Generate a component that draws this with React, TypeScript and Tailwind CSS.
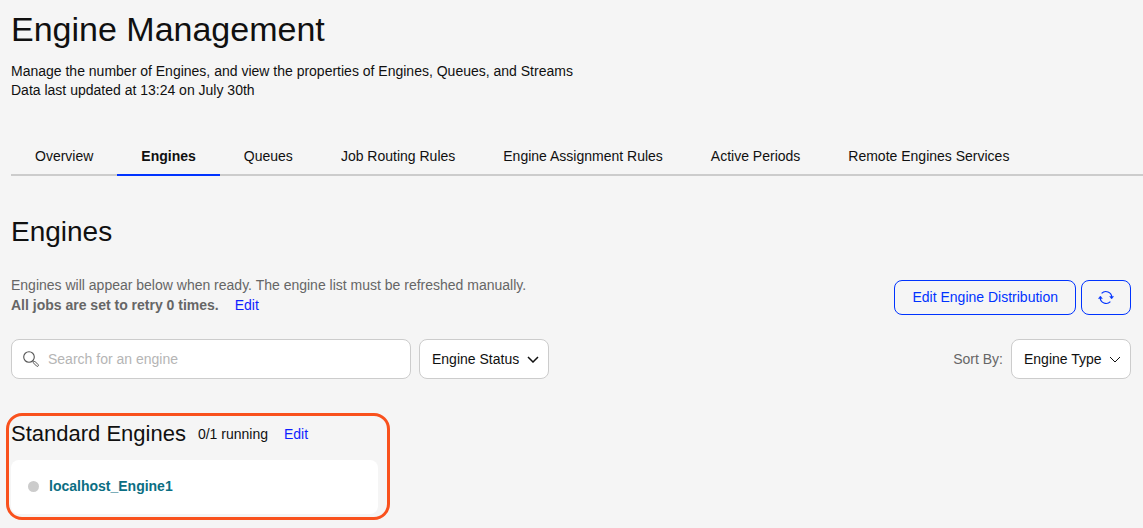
import { useState } from 'react';

const tabs = [
    'Overview',
    'Engines',
    'Queues',
    'Job Routing Rules',
    'Engine Assignment Rules',
    'Active Periods',
    'Remote Engines Services',
];

const engines = [{ name: 'localhost_Engine1', running: false }];

const SearchIcon = () => (
    <svg className="w-4 h-4 shrink-0" viewBox="0 0 16 16" fill="none" stroke="#555555">
        <circle cx="6" cy="6" r="5.3" strokeWidth="1.1" />
        <path d="M9.7 9.7l.9.9" strokeWidth="1.2" />
        <path
            d="M11.7 10.2l3.4 3.4a1 1 0 0 1-1.5 1.5l-3.4-3.4z"
            strokeWidth="1"
            strokeLinejoin="round"
        />
    </svg>
);

const RefreshIcon = () => (
    <svg className="w-4 h-4" viewBox="0 0 16 16" fill="none" stroke="currentColor">
        <path d="M3.6 4.4A5.9 5.9 0 0 1 13.8 8.4" strokeWidth="1.1" />
        <path d="M12.4 12.6A5.9 5.9 0 0 1 2.2 8.6" strokeWidth="1.1" />
        <path d="M11.6 7.4h4l-2 2.6z" fill="currentColor" strokeWidth=".4" />
        <path d="M.4 9.6h4l-2-2.6z" fill="currentColor" strokeWidth=".4" />
    </svg>
);

const Chevron = ({ className }: { className: string }) => (
    <svg
        className={`absolute top-4 h-2 pointer-events-none ${className}`}
        viewBox="0 0 12 8"
        fill="none"
        stroke="currentColor"
    >
        <path d="M1 2l5 5 5-5" />
    </svg>
);

const App = () => {
    const [active, setActive] = useState('Engines');
    const [search, setSearch] = useState('');

    const visible = engines.filter((engine) =>
        engine.name.toLowerCase().includes(search.toLowerCase()),
    );

    return (
        <div className="min-h-screen bg-[#f5f5f5] pl-[11px] pt-[7px] pb-2 font-['Liberation_Sans',Arial,sans-serif] text-sm text-[#101010]">
            <header>
                <h1 className="text-[34px] leading-[44px]">Engine Management</h1>
                <p className="mt-[11px] leading-[19px]">
                    Manage the number of Engines, and view the properties of
                    Engines, Queues, and Streams
                    <br />
                    Data last updated at 13:24 on July 30th
                </p>
            </header>

            <nav className="mt-9 flex border-b-2 border-[#cccccc]">
                {tabs.map((tab) => (
                    <button
                        key={tab}
                        onClick={() => setActive(tab)}
                        className={`-mb-0.5 px-6 pt-0.5 h-10 border-b-2 whitespace-nowrap ${
                            active === tab
                                ? 'border-[#0033ff] font-bold'
                                : 'border-transparent'
                        }`}
                    >
                        {tab}
                    </button>
                ))}
            </nav>

            <main className="pr-3">
                <h2 className="mt-10 text-[28px] leading-8">Engines</h2>

                <div className="mt-[27px] flex items-center justify-between">
                    <div className="leading-5 text-[#666666]">
                        <p>
                            Engines will appear below when ready. The engine list
                            must be refreshed manually.
                        </p>
                        <p>
                            <strong>All jobs are set to retry 0 times.</strong>
                            <a href="#retries" className="ml-4 text-[#0f1fff]">
                                Edit
                            </a>
                        </p>
                    </div>
                    <div className="flex gap-[5px] pt-1 text-[#0033ff]">
                        <button className="h-[35px] px-[17px] border border-current rounded-lg whitespace-nowrap">
                            Edit Engine Distribution
                        </button>
                        <button
                            aria-label="Refresh"
                            className="h-[35px] w-[50px] border border-current rounded-lg flex items-center justify-center"
                        >
                            <RefreshIcon />
                        </button>
                    </div>
                </div>

                <div className="mt-6 flex items-center justify-between">
                    <div className="flex gap-2">
                        <label className="flex items-center gap-[9px] h-10 w-[400px] pl-[11px] pr-3 bg-white border border-[#cccccc] rounded-lg">
                            <SearchIcon />
                            <input
                                type="text"
                                aria-label="Search for an engine"
                                placeholder="Search for an engine"
                                value={search}
                                onChange={(e) => setSearch(e.target.value)}
                                className="flex-1 outline-none placeholder:text-[#b5b5b5]"
                            />
                        </label>
                        <div className="relative">
                            <select
                                aria-label="Engine Status"
                                className="h-10 w-[130px] pl-3 appearance-none bg-white border border-[#cccccc] rounded-lg"
                            >
                                <option>Engine Status</option>
                            </select>
                            <Chevron className="right-2.5 w-3 stroke-[1.5]" />
                        </div>
                    </div>
                    <div className="flex items-center gap-2">
                        <label htmlFor="sort" className="text-[#666666]">
                            Sort By:
                        </label>
                        <div className="relative">
                            <select
                                id="sort"
                                className="h-10 w-[120px] pl-3 appearance-none bg-white border border-[#cccccc] rounded-lg"
                            >
                                <option>Engine Type</option>
                            </select>
                            <Chevron className="right-2.5 w-3" />
                        </div>
                    </div>
                </div>

                <section className="mt-[34px] -ml-[5px] w-[384px] border-3 border-[#f9511d] rounded-2xl pl-0.5 pr-[9px] pt-1 pb-[3px]">
                    <div className="flex items-center">
                        <h3 className="text-[22px] leading-7">Standard Engines</h3>
                        <span className="ml-3">0/1 running</span>
                        <a href="#standard" className="ml-4 text-[#0f1fff]">
                            Edit
                        </a>
                    </div>
                    <ul className="mt-3">
                        {visible.map((engine) => (
                            <li
                                key={engine.name}
                                className="flex items-center gap-2.5 h-[54px] px-[17px] pb-0.5 bg-white rounded-lg"
                            >
                                <span
                                    className={`w-[11px] h-[11px] rounded-full ${
                                        engine.running
                                            ? 'bg-green-500'
                                            : 'bg-[#cccccc]'
                                    }`}
                                />
                                <a
                                    href="#engine"
                                    className="font-bold text-[#0b6e83]"
                                >
                                    {engine.name}
                                </a>
                            </li>
                        ))}
                    </ul>
                </section>
            </main>
        </div>
    );
};

export default App;
